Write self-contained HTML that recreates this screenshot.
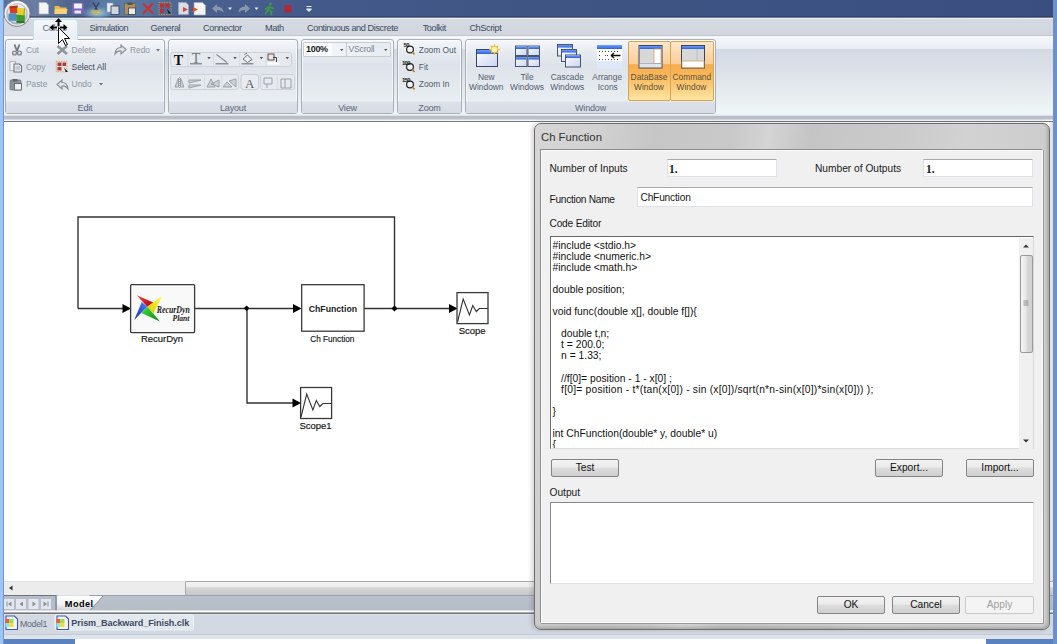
<!DOCTYPE html>
<html><head><meta charset="utf-8">
<style>
*{margin:0;padding:0;box-sizing:border-box}
html,body{width:1057px;height:644px;overflow:hidden;background:#fff;font-family:"Liberation Sans",sans-serif;position:relative}
.a{position:absolute}
.t{position:absolute;white-space:pre;line-height:1}
#lb{left:0;top:0;width:4px;height:644px;background:linear-gradient(90deg,#a3c6f4 0,#9cc1f2 70%,#6e9ad8 75%,#6e9ad8 100%)}
#rb{left:1053px;top:0;width:4px;height:644px;background:#6e90c7}
#title{left:4px;top:0;width:1049px;height:19px;background:linear-gradient(rgba(0,0,0,0) 0,rgba(0,0,0,0) 15.5px,rgba(40,55,90,.5) 16.5px,rgba(140,148,162,1) 18px,#eef0f3 18px),linear-gradient(90deg,#5d7198 0,#6a7ea3 3%,#52678f 6%,#4d6590 8%,#5a7ea6 9.5%,#5a7aa2 12%,#4a6190 18%,#43598a 30%,#3f5684 50%,#3c5282 75%,#3a4f7f 100%)}
#tabs{left:4px;top:19px;width:1049px;height:20px;background:linear-gradient(#d5dae2 0,#d2d7df 16.5px,#c2c6cd 16.5px,#c2c6cd 17.5px,#f4f6f9 17.5px)}
#ribbon{left:4px;top:38px;width:1049px;height:77px;background:linear-gradient(#f4f7fb 0,#e8ecf3 11.5px,#d3d9e3 11.5px,#dfe4ea 40px,#e8eef0 60px,#eff8f8 77px)}
#rband{left:4px;top:114px;width:1049px;height:8px;background:linear-gradient(#eef1f4 0,#eef1f4 1px,#dfe3e9 1px,#dfe3e9 2px,#b7bdc6 2px,#bcc2ca 5px,#d3d8de 5px,#d3d8de 6px,#f3f5f8 6px,#f3f5f8 7px,#74777e 7px,#74777e 8px)}
.grp{position:absolute;top:39px;height:75px;border:1px solid #a9afb8;box-shadow:inset 0 0 0 1px rgba(255,255,255,.6);border-radius:3px;background:linear-gradient(#f5f7fa 0,#e6eaf0 18%,#dee3eb 35%,#e8edf1 80%,#edf2f3 100%)}
.glab{position:absolute;left:0;right:0;bottom:0;height:12px;background:linear-gradient(#dde2ea,#d6dbe4);border-top:1px solid #e6eaf0;color:#5a6678;font-size:9px;letter-spacing:-0.15px;text-align:center;line-height:12.5px}
.tab{font-size:9.2px;color:#3c4a5e;letter-spacing:-0.42px}
.tab{margin-top:0px}
.obtn{border:1px solid #d7a450;border-radius:2px;background:linear-gradient(#fde8cc 0,#fcd8ab 20%,#fbcd98 38%,#f8ad4e 39%,#f9b558 55%,#fbcf7e 80%,#fde6a2 100%)}
.rt{font-size:8.4px;color:#8c95a2}
.wl{transform:translateX(-50%);color:#515c6c}
.dk{color:#3b4654}
#canvas{left:4px;top:122px;width:1049px;height:459px;background:#fff}
#hs{left:4px;top:581px;width:1049px;height:14px;background:#ececec;border-top:1px solid #e0e0e0}
#sheet{left:4px;top:595px;width:1049px;height:15.5px;background:linear-gradient(#bac2cc,#b4bcc6)}
#doctabs{left:4px;top:613px;width:1049px;height:21px;background:#d3d9e2}
#bot1{left:4px;top:634px;width:1049px;height:5px;background:#dde3ea;border-top:1px solid #c4cbd6}
#bot2{left:75px;top:639px;width:911px;height:5px;background:#fff}
#botb1{left:0;top:639px;width:75px;height:5px;background:#5b82c0}
#botb2{left:986px;top:639px;width:71px;height:5px;background:#5b82c0}
/* dialog */
#dlg{left:534px;top:123px;width:516px;height:507px;border:1px solid #6e6e6e;border-radius:7px;background:linear-gradient(100deg,#d6d6d6 0,#d2d2d2 10%,#c6c6c6 20%,#c9c9c9 33%,#d4d4d4 39%,#c5c5c5 46%,#cacaca 60%,#d2d2d2 72%,#cdcdcd 85%,#d0d0d0 100%);box-shadow:-2px 0 5px rgba(0,0,0,.18),inset -2px -2px 3px rgba(0,0,0,.18)}
#panel{left:540px;top:149px;width:503px;height:474px;background:#f0f0f0;border:1px solid #8c8c8c;border-right-color:#fafafa;border-bottom-color:#fafafa;box-shadow:1px 1px 0 #9a9a9a,inset 1px 1px 0 #fafafa}
.lbl{font-size:10.2px;color:#1a1a1a}
.inp{position:absolute;background:#fff;border:1px solid #dde2e8;border-top-color:#a9a9a9}
.btn{position:absolute;height:18px;border:1px solid #858585;border-radius:2px;background:linear-gradient(#f2f2f2 0,#ebebeb 45%,#dddddd 50%,#cfcfcf 100%);font-size:10.2px;text-align:center;line-height:16.5px;color:#111}
#code{left:550px;top:236px;width:484px;height:213px;background:#fff;border:1px solid #6f6f6f;border-top:1.5px solid #666;border-right-color:#dadada;border-bottom-color:#dadada;overflow:hidden}
.code{position:absolute;left:1.5px;top:2.8px;font-size:10.3px;line-height:11.07px;color:#111;white-space:pre}
</style></head><body>
<div class="a" id="title"></div>
<div class="a" id="tabs"></div>
<div class="a" id="ribbon"></div>
<div class="a" id="rband"></div>
<div class="a" id="canvas"></div>
<div class="a" id="hs"></div>
<div class="a" style="left:1049px;top:122px;width:4px;height:473px;background:linear-gradient(90deg,#f2f2f2,#dedede)"></div>
<div class="a" id="sheet"></div>
<div class="a" id="doctabs"></div>
<div class="a" id="bot1"></div>
<div class="a" id="bot2"></div>
<div class="a" id="botb1"></div>
<div class="a" id="botb2"></div>
<div class="a" id="lb"></div>
<div class="a" id="rb"></div>

<!-- ribbon -->
<div class="grp" style="left:5px;width:160px"><div class="glab">Edit</div></div>
<div class="grp" style="left:168px;width:130px"><div class="glab">Layout</div></div>
<div class="grp" style="left:301px;width:93px"><div class="glab">View</div></div>
<div class="grp" style="left:397px;width:65px"><div class="glab">Zoom</div></div>
<div class="grp" style="left:465px;width:251px"><div class="glab">Window</div></div>
<div class="a obtn" style="left:628px;top:41px;width:43px;height:60px"></div>
<div class="a obtn" style="left:670px;top:41px;width:44px;height:60px"></div>
<div class="t rt wl" style="left:649px;top:72.7px;color:#5e5035">DataBase</div>
<div class="t rt wl" style="left:649px;top:82.7px;color:#5e5035">Window</div>
<div class="t rt wl" style="left:691.8px;top:72.7px;color:#5e5035">Command</div>
<div class="t rt wl" style="left:691.5px;top:82.7px;color:#5e5035">Window</div>
<!-- combos -->
<div class="a" style="left:303px;top:41.5px;width:88px;height:15.5px;border:1px solid #c7ccd3;background:linear-gradient(90deg,#f7f9fb 0,#eef1f5 50%,#e8ecf1 100%);border-radius:1px"></div>
<div class="a" style="left:346px;top:42px;width:1px;height:14.5px;background:#c7ccd3"></div>
<div class="a" style="left:304px;top:42.5px;width:28px;height:13.5px;background:#f8fafc"></div>
<div class="t" style="left:306px;top:45px;font-size:9px;color:#1a1a1a;font-weight:bold;letter-spacing:-0.3px">100%</div>
<div class="t" style="left:348.5px;top:45px;font-size:8.6px;color:#7a8390;letter-spacing:-0.2px">VScroll</div>
<svg class="a" style="left:0;top:0" width="1057" height="122" viewBox="0 0 1057 122">
<defs>
<radialGradient id="orb" cx="0.5" cy="0.45" r="0.55"><stop offset="0" stop-color="#ffffff"/><stop offset="0.75" stop-color="#e8eaee"/><stop offset="0.9" stop-color="#b8bcc4"/><stop offset="1" stop-color="#8d939c"/></radialGradient>
<linearGradient id="wtb" x1="0" y1="0" x2="0" y2="1"><stop offset="0" stop-color="#6fa0ff"/><stop offset="1" stop-color="#2f5fd8"/></linearGradient>
<linearGradient id="wbody" x1="0" y1="0" x2="1" y2="1"><stop offset="0" stop-color="#ffffff"/><stop offset="1" stop-color="#c9d4f4"/></linearGradient>
<linearGradient id="glow" x1="0" y1="0" x2="1" y2="0"><stop offset="0" stop-color="#5d7aa8" stop-opacity="0"/><stop offset="0.5" stop-color="#9ad0f0" stop-opacity="0.8"/><stop offset="1" stop-color="#5d7aa8" stop-opacity="0"/></linearGradient>
</defs>
<!-- title glow -->

<radialGradient id="glw" cx="0.5" cy="0.5" r="0.5"><stop offset="0" stop-color="#c0ecff" stop-opacity="0.85"/><stop offset="1" stop-color="#80b0d8" stop-opacity="0"/></radialGradient><ellipse cx="97" cy="13" rx="16" ry="7" fill="url(#glw)"/>
<!-- orb -->
<linearGradient id="orbr" x1="0" y1="0" x2="0" y2="1"><stop offset="0" stop-color="#f4f4f6"/><stop offset="1" stop-color="#b4b8c0"/></linearGradient>
<circle cx="17" cy="13.5" r="13" fill="url(#orbr)" stroke="#6f757e" stroke-width="0.7"/>
<circle cx="17" cy="13.5" r="11.8" fill="none" stroke="#ffffff" stroke-width="1" opacity="0.8"/>
<circle cx="17" cy="13.8" r="10.2" fill="url(#orb)" stroke="#a9aeb6" stroke-width="0.6"/>
<path d="M9.5 6.5L17.5 5.5L18 13L10 13.5Z" fill="#d8401c"/><path d="M9.5 6.5L17.5 5.5L17.8 7.5L10 8.5Z" fill="#a02818" opacity="0.6"/>
<path d="M17 7.5L25 8.5L24.5 16L17.5 15Z" fill="#e2d22a"/><path d="M24 8.5L25 8.5L24.5 16L23.5 16Z" fill="#a89a10"/>
<path d="M8.5 13.5L16.5 13L16.5 21L8.5 20.5Z" fill="#4f8fc4"/>
<path d="M16 14.5L25 15.5L24.5 23L16.5 22.5Z" fill="#3f9a32"/><path d="M16.5 21L24.5 21.5L24.5 23L16.5 22.5Z" fill="#2a6a20"/>
<!-- QAT -->
<path d="M39 2.5H46L48.5 5V14H39Z" fill="#f4f4f4" stroke="#b0b4bc" stroke-width="0.7"/>
<path d="M54.5 6H59L60.5 7.5H66.5V14H54.5Z" fill="#e9b94a"/><path d="M55 9H67.5L66.5 14H54.5Z" fill="#f5d27a"/>
<rect x="72" y="3" width="12" height="11" fill="#7a63b8"/><rect x="74" y="3.5" width="8" height="5" fill="#f0f0f8"/><rect x="74.5" y="10.5" width="6.5" height="3" fill="#e8e8f0"/>
<path d="M93 2.5L97.5 10M99 2.5L94.5 10" stroke="#33415a" stroke-width="1.4"/><circle cx="94" cy="12" r="2" fill="none" stroke="#c8b040" stroke-width="1.2"/><circle cx="98.5" cy="12" r="2" fill="none" stroke="#c8b040" stroke-width="1.2"/>
<rect x="107" y="3" width="6" height="9" fill="#e8ecf2" stroke="#9aa4b2" stroke-width="0.6"/><rect x="111" y="6" width="8" height="8.5" fill="#cfd6e0" stroke="#3e4a5a" stroke-width="0.9"/>
<rect x="124.5" y="3.5" width="11" height="11" fill="#b09060" stroke="#6b5a40" stroke-width="0.6"/><rect x="128.5" y="8" width="7" height="6.5" fill="#e8eaee" stroke="#333" stroke-width="0.7"/><rect x="127.5" y="2.5" width="5" height="2.5" fill="#555"/>
<path d="M143 3.5L153 13.5M153 3.5L143 13.5" stroke="#d42c2c" stroke-width="2"/>
<g fill="#c03030"><rect x="160" y="3.5" width="4" height="4"/><rect x="165.5" y="3.5" width="4" height="4"/><rect x="160" y="9" width="4" height="4"/></g><rect x="159" y="2.5" width="12" height="12" fill="none" stroke="#e09030" stroke-width="0.8" stroke-dasharray="1.5 1"/><path d="M167 9L171 13.5L168.5 13.5Z" fill="#111"/>
<path d="M178.5 2.5H186L188.5 5V14.5H178.5Z" fill="#d8dce4" stroke="#a0a8b4" stroke-width="0.6"/><path d="M183 7L188 9.5L183 12Z" fill="#e04040"/>
<path d="M194 2.5H202.5L205.5 5.5V15H194Z" fill="#f4f4f4" stroke="#a0a8b4" stroke-width="0.6"/><path d="M193 7L198 9.5L193 12Z" fill="#ee5010"/>
<path d="M212 8.5L217 4V6.5Q223 6.5 223.5 12.5Q221 9.5 217 10V13Z" fill="#8a97aa"/>
<path d="M228 7.5L232 7.5L230 10Z" fill="#e6ebf2"/>
<path d="M250 8.5L245 4V6.5Q239 6.5 238.5 12.5Q241 9.5 245 10V13Z" fill="#8a97aa"/>
<path d="M254.5 7.5L258.5 7.5L256.5 10Z" fill="#e6ebf2"/>
<g stroke="#3a9a48" stroke-width="1.8" fill="none" stroke-linecap="round"><circle cx="270.5" cy="4" r="1.4" fill="#3a9a48" stroke="none"/><path d="M269.5 6.5L268 10.5L265.5 13.5M268.5 10L271.5 11.5L271 14.5M269.5 7L273.5 8.5M268 7.5L265.5 9"/></g>
<rect x="284.5" y="5" width="7" height="7.5" fill="#b02838"/>
<path d="M306.5 6.5H311.5M306.5 9L309 11.5L311.5 9Z" stroke="#e8eef6" stroke-width="1" fill="#e8eef6"/>
<!-- Edit group icons -->
<g>
<path d="M14.5 44.5L17 51M19.5 44.5L17 51" stroke="#6f757d" stroke-width="1.8"/><circle cx="14.5" cy="53" r="1.9" fill="none" stroke="#80868e" stroke-width="1.4"/><circle cx="19.5" cy="53" r="1.9" fill="none" stroke="#80868e" stroke-width="1.4"/>
<path d="M57.5 46L67 54M67 46L57.5 54" stroke="#8f949b" stroke-width="2.6"/>
<path d="M126 49.5L121 45V47.5Q115.5 47.5 115 54Q117.5 50.5 121 51V54Z" fill="#e4e7ea" stroke="#8a9098" stroke-width="1.2"/>
<path d="M156 49L160 49L158 51.5Z" fill="#6a7280"/>
<rect x="10" y="61.5" width="5.5" height="9" fill="#eef0f3" stroke="#a2a7af" stroke-width="0.8"/><path d="M14 64H19.5L21.5 66V72H14Z" fill="#e6e9ee" stroke="#6f757d" stroke-width="1.1"/><path d="M15.5 67H20M15.5 69H20" stroke="#8a9098" stroke-width="0.7"/>
<g fill="#b03a3a"><rect x="57.5" y="62.5" width="4" height="3.5"/><rect x="62.5" y="62.5" width="3.5" height="3.5"/><rect x="57.5" y="67" width="4" height="3.5"/></g><rect x="56.3" y="61.3" width="10.5" height="10.5" fill="none" stroke="#e59c3a" stroke-width="0.9" stroke-dasharray="1.4 1"/><path d="M64 67.5L68 72L65.8 72Z" fill="#111"/>
<rect x="10" y="80" width="11" height="10" rx="1" fill="#8e939a" stroke="#6a7078" stroke-width="0.7"/><rect x="14.5" y="83.5" width="7" height="6.5" fill="#eef0f3" stroke="#60666e" stroke-width="0.9"/><rect x="12.5" y="79" width="5" height="2.5" fill="#60666e"/>
<path d="M57 84.5L62 80V82.5Q67.5 82.5 68 89Q65.5 85.5 62 86V89Z" fill="#e4e7ea" stroke="#8a9098" stroke-width="1.2"/>
<path d="M99 83L103 83L101 85.5Z" fill="#6a7280"/>
</g>
<!-- Layout group -->
<rect x="170.5" y="52.5" width="121" height="14" rx="2.5" fill="#e6eaef" stroke="#c6ccd4" stroke-width="0.8"/>
<rect x="170.5" y="74.5" width="68" height="15" rx="2.5" fill="#e6eaef" stroke="#c6ccd4" stroke-width="0.8"/>
<rect x="241" y="74.5" width="17.5" height="15" rx="2.5" fill="#e9edf2" stroke="#bfc5cd" stroke-width="0.8"/>
<rect x="260.5" y="74.5" width="34" height="15" rx="2.5" fill="#e6eaef" stroke="#c6ccd4" stroke-width="0.8"/>
<text x="178.5" y="64.5" font-family="Liberation Serif" font-weight="bold" font-size="14" fill="#111" text-anchor="middle">T</text>
<text x="196" y="62.5" font-family="Liberation Serif" font-size="14" fill="#6f747b" text-anchor="middle">T</text><rect x="190" y="63" width="12" height="1.5" fill="#8a9098"/>
<path d="M207.3 57L210.8 57L209 59.3Z M233.3 57L236.8 57L235 59.3Z M259.6 57L263.1 57L261.3 59.3Z M285.5 57L289 57L287.3 59.3Z" fill="#555"/><path d="M188 53.5V66M213.5 53.5V66M239.7 53.5V66M265.9 53.5V66M188 75.5V89M204.6 75.5V89M221.8 75.5V89M277.4 75.5V89" stroke="#d2d7de" stroke-width="0.8"/>
<path d="M216.5 54.5L227 62.5" stroke="#8a9098" stroke-width="1.2"/><rect x="215.5" y="63" width="13" height="1.5" fill="#8a9098"/>
<path d="M243 59L247.5 55L252 59.5L247.5 62.5Z" fill="#f0f0f0" stroke="#6a6f76" stroke-width="1"/><path d="M244.5 54.5L247 53" stroke="#6a6f76" stroke-width="1"/><rect x="241.5" y="63" width="12" height="1.5" fill="#8a9098"/>
<rect x="268" y="54" width="6" height="6" fill="#f4e4e0" stroke="#333" stroke-width="0.8"/><path d="M273 57.5H276.5V62" stroke="#333" stroke-width="0.9" fill="none"/><rect x="267.5" y="62.5" width="12" height="2" fill="#fff"/>
<g stroke="#9aa0a8" stroke-width="1" fill="#cdd2d9">
<path d="M175 87L178.5 78V87Z M180.5 78L184 87H180.5Z"/><path d="M179.5 77V89" stroke-dasharray="1 1" fill="none"/>
<path d="M189 80H201L189 83Z M189 85H201L189 88Z" />
<path d="M207 87L211 79L215 87Z M211 84L219 80L219 87Z"/>
<path d="M223 87L227 82L232 87Z M229 81L236 79L236 87Z"/>
<path d="M264 78H272V84H264Z M267 84V88" fill="none"/>
<path d="M281 79H291V88H281Z M285 79V88" fill="none"/>
</g>
<text x="249.8" y="87.5" font-family="Liberation Serif" font-size="13" fill="#5a5f66" text-anchor="middle">A</text>
<!-- combo arrows -->
<path d="M340 49L343.5 49L341.8 51Z M384 49L387.5 49L385.8 51Z" fill="#555"/>
<!-- Zoom icons -->
<g>
<circle cx="410" cy="49.5" r="3.4" fill="#f2f4f4" stroke="#222" stroke-width="1.2"/><path d="M412.3 52L414.5 54.5" stroke="#c08030" stroke-width="1.8"/><text x="403.5" y="47" font-family="Liberation Sans" font-weight="bold" font-size="5.8" fill="#111" letter-spacing="-0.4">50</text>
<circle cx="410" cy="67" r="3.4" fill="#f2f4f4" stroke="#222" stroke-width="1.2"/><path d="M412.3 69.5L414.5 72" stroke="#c08030" stroke-width="1.8"/><text x="402" y="64.5" font-family="Liberation Sans" font-weight="bold" font-size="5.8" fill="#111" letter-spacing="-0.6">100</text>
<circle cx="410" cy="84.5" r="3.4" fill="#f2f4f4" stroke="#222" stroke-width="1.2"/><path d="M412.3 87L414.5 89.5" stroke="#c08030" stroke-width="1.8"/><text x="402" y="82" font-family="Liberation Sans" font-weight="bold" font-size="5.8" fill="#111" letter-spacing="-0.6">150</text>
</g>
<!-- Window icons -->
<g>
<rect x="476.5" y="49.5" width="21" height="17" fill="url(#wbody)" stroke="#3a4660" stroke-width="1"/><rect x="477" y="50" width="20" height="4" fill="url(#wtb)"/>
<path d="M500.3 49.5 L497.5 50.7 L498.6 53.6 L495.7 52.5 L494.5 55.3 L493.3 52.5 L490.4 53.6 L491.5 50.7 L488.7 49.5 L491.5 48.3 L490.4 45.4 L493.3 46.5 L494.5 43.7 L495.7 46.5 L498.6 45.4 L497.5 48.3Z" fill="#f0b828"/><circle cx="494.5" cy="49.5" r="2.8" fill="#fff4b0"/>
<rect x="515.5" y="46" width="11.5" height="9.5" fill="url(#wbody)" stroke="#3a4660" stroke-width="0.9"/><rect x="516" y="46.5" width="10.5" height="2.5" fill="url(#wtb)"/>
<rect x="528" y="46" width="11.5" height="9.5" fill="url(#wbody)" stroke="#3a4660" stroke-width="0.9"/><rect x="528.5" y="46.5" width="10.5" height="2.5" fill="url(#wtb)"/>
<rect x="515.5" y="56.5" width="11.5" height="10" fill="url(#wbody)" stroke="#3a4660" stroke-width="0.9"/><rect x="516" y="57" width="10.5" height="2.5" fill="url(#wtb)"/>
<rect x="528" y="56.5" width="11.5" height="10" fill="url(#wbody)" stroke="#3a4660" stroke-width="0.9"/><rect x="528.5" y="57" width="10.5" height="2.5" fill="url(#wtb)"/>
<rect x="557.5" y="44.5" width="15" height="11.5" fill="url(#wbody)" stroke="#3a4660" stroke-width="0.9"/><rect x="558" y="45" width="14" height="2.5" fill="url(#wtb)"/>
<rect x="561.5" y="49.5" width="15" height="12" fill="url(#wbody)" stroke="#3a4660" stroke-width="0.9"/><rect x="562" y="50" width="14" height="2.5" fill="url(#wtb)"/>
<rect x="565.5" y="55" width="15" height="12" fill="url(#wbody)" stroke="#3a4660" stroke-width="0.9"/><rect x="566" y="55.5" width="14" height="2.5" fill="url(#wtb)"/>
<rect x="597" y="45" width="25" height="23.5" fill="#dfe7fb"/><rect x="597" y="45" width="25" height="4" fill="url(#wtb)"/><rect x="597" y="49" width="25" height="12" fill="#fff"/>
<g fill="#444"><rect x="599" y="51" width="1" height="1"/><rect x="602" y="51" width="1" height="1"/><rect x="605" y="51" width="1" height="1"/><rect x="608" y="51" width="1" height="1"/><rect x="611" y="51" width="1" height="1"/><rect x="614" y="51" width="1" height="1"/><rect x="617" y="51" width="1" height="1"/><rect x="599" y="55" width="1" height="1"/><rect x="605" y="55" width="1" height="1"/><rect x="607" y="55" width="1" height="1"/><rect x="599" y="59" width="1" height="1"/><rect x="602" y="59" width="1" height="1"/><rect x="605" y="59" width="1" height="1"/><rect x="608" y="59" width="1" height="1"/><rect x="611" y="59" width="1" height="1"/><rect x="614" y="59" width="1" height="1"/><rect x="617" y="59" width="1" height="1"/></g>
<path d="M611 55.5H620.5M611 55.5L614 53M611 55.5L614 58" stroke="#111" stroke-width="1.3" fill="none"/>
<rect x="639" y="45.5" width="23" height="22.5" fill="#d8d8d8" stroke="#3a4660" stroke-width="1"/><rect x="639.5" y="46" width="22" height="3" fill="url(#wtb)"/><rect x="654" y="49" width="7" height="14.5" fill="#fff" stroke="#c8a870" stroke-width="0.8"/><rect x="639.5" y="63.5" width="22" height="4" fill="#e4e4e4" stroke="#7a8aa8" stroke-width="0.5"/>
<rect x="681.5" y="45.5" width="23" height="22.5" fill="#d8d8d8" stroke="#3a4660" stroke-width="1"/><rect x="682" y="46" width="22" height="3" fill="url(#wtb)"/><rect x="682" y="61" width="22" height="6.5" fill="#fff" stroke="#c8a870" stroke-width="0.8"/><path d="M697 49V61" stroke="#b0b8c8" stroke-width="0.8"/>
</g>
</svg>
<!-- ribbon text -->
<div class="t rt" style="left:25.9px;top:45.8px">Cut</div>
<div class="t rt" style="left:71.6px;top:45.8px">Delete</div>
<div class="t rt" style="left:130px;top:45.8px">Redo</div>
<div class="t rt" style="left:25.9px;top:62.6px">Copy</div>
<div class="t rt dk" style="left:71.6px;top:62.6px">Select All</div>
<div class="t rt" style="left:25.9px;top:79.9px">Paste</div>
<div class="t rt" style="left:71.6px;top:79.9px">Undo</div>
<div class="t rt dk" style="left:418.8px;top:45.6px;color:#4f5b6b">Zoom Out</div>
<div class="t rt dk" style="left:418.8px;top:62.9px;color:#4f5b6b">Fit</div>
<div class="t rt dk" style="left:418.8px;top:80px;color:#4f5b6b">Zoom In</div>
<div class="t rt wl" style="left:486.3px;top:72.7px">New</div>
<div class="t rt wl" style="left:486.3px;top:82.7px">Windown</div>
<div class="t rt wl" style="left:527px;top:72.7px">Tile</div>
<div class="t rt wl" style="left:527px;top:82.7px">Windows</div>
<div class="t rt wl" style="left:567.3px;top:72.7px">Cascade</div>
<div class="t rt wl" style="left:567.3px;top:82.7px">Windows</div>
<div class="t rt wl" style="left:607.2px;top:72.7px">Arrange</div>
<div class="t rt wl" style="left:607.8px;top:82.7px">Icons</div>
<!-- tabs -->
<div class="a" style="left:33px;top:19px;width:45px;height:21px;border:1px solid #bfe3ea;border-bottom:none;border-radius:3px 3px 0 0;background:linear-gradient(#f4f7fb,#e9eef5)"></div>
<div class="t tab" style="left:42.5px;top:24.3px;color:#5a6e8a">Colors</div>
<div class="t tab" style="left:89.5px;top:24.3px">Simulation</div>
<div class="t tab" style="left:150.5px;top:24.3px">General</div>
<div class="t tab" style="left:203px;top:24.3px">Connector</div>
<div class="t tab" style="left:265px;top:24.3px">Math</div>
<div class="t tab" style="left:307px;top:24.3px">Continuous and Discrete</div>
<div class="t tab" style="left:422.7px;top:24.3px">Toolkit</div>
<div class="t tab" style="left:469.4px;top:24.3px">ChScript</div>
<!-- bottom -->
<div class="a" style="left:185px;top:581px;width:868px;height:14.5px;border:1px solid #a9a9a9;border-right:none;border-radius:2px 0 0 2px;background:linear-gradient(#f2f2f2 0,#ececec 35%,#d6d6d6 45%,#c8c8c8 100%)"></div>
<svg class="a" style="left:0;top:0" width="1057" height="644" viewBox="0 0 1057 644">
<path d="M12.5 585.5V590.5L9 588Z" fill="#333"/>
<rect x="4" y="595.5" width="52" height="15.5" fill="#b4bdc9"/>
<path d="M4 595.5H56V611" stroke="#6f747b" stroke-width="1" fill="none"/>
<g fill="#e4e8ee"><rect x="4" y="599" width="10" height="10"/><rect x="16" y="599" width="10" height="10"/><rect x="28.5" y="599" width="10" height="10"/><rect x="41" y="599" width="10" height="10"/></g>
<g fill="#8a9098"><path d="M6.5 601.5H7.5V606.5H6.5Z M11.5 601.5V606.5L8 604Z"/><path d="M23 601.5V606.5L19.5 604Z"/><path d="M32.5 601.5V606.5L36 604Z"/><path d="M43.5 601.5V606.5L47 604Z M47.5 601.5H48.5V606.5H47.5Z"/></g>
<defs><linearGradient id="mt" x1="0" y1="0" x2="0" y2="1"><stop offset="0" stop-color="#ffffff"/><stop offset="0.6" stop-color="#eef0f2"/><stop offset="1" stop-color="#c8ccd2"/></linearGradient></defs>
<path d="M57 611V597Q57 595.5 58.5 595.5H103.5L89.5 611Z" fill="url(#mt)"/>
<path d="M103.5 595.5L89.5 611" stroke="#7c8088" stroke-width="0.8"/>
<path d="M89.5 595.5H1053" stroke="#9aa2ad" stroke-width="1"/>
<rect x="4" y="610.4" width="1049" height="2" fill="#fbfbfc"/><rect x="4" y="612.6" width="1049" height="1.2" fill="#36383e"/><rect x="4" y="613.8" width="1049" height="1" fill="#e2e6ee"/>
<rect x="55" y="614.5" width="138.5" height="15.5" rx="1.5" fill="#e3e8ee" stroke="#e6f4f6" stroke-width="1"/>
<g>
<path d="M6 616H14.5L17.5 619V629.5H6Z" fill="#f2f4fb" stroke="#4656a6" stroke-width="1.1"/><rect x="5.5" y="619" width="4" height="4" fill="#ff5a20"/><rect x="9.5" y="619" width="4" height="4" fill="#90e060"/><rect x="5.5" y="623" width="4" height="4" fill="#80e8f0"/><rect x="9.5" y="623" width="4" height="4" fill="#f8e020"/>
<path d="M57 616H65.5L68.5 619V629.5H57Z" fill="#f2f4fb" stroke="#4656a6" stroke-width="1.1"/><rect x="56.5" y="619" width="4" height="4" fill="#ff5a20"/><rect x="60.5" y="619" width="4" height="4" fill="#90e060"/><rect x="56.5" y="623" width="4" height="4" fill="#80e8f0"/><rect x="60.5" y="623" width="4" height="4" fill="#f8e020"/>
</g>
</svg>
<div class="t" style="left:64.8px;top:599.8px;font-size:9.2px;font-weight:bold;color:#000;letter-spacing:0.45px">Model</div>
<div class="t" style="left:20px;top:619.5px;font-size:8.8px;color:#5c6878;letter-spacing:-0.3px">Model1</div>
<div class="t" style="left:71.3px;top:618.6px;font-size:9.1px;font-weight:bold;color:#3c4a60;letter-spacing:-0.1px">Prism_Backward_Finish.clk</div>
<!-- cursor -->
<svg class="a" style="left:0;top:0" width="120" height="60" viewBox="0 0 120 60">
<g fill="#000" stroke="#fff" stroke-width="1" paint-order="stroke" stroke-linejoin="miter">
<path d="M58.5 18L62 22H59.5V26.5H57.5V22H55Z"/>
<path d="M49.5 27.5L53.5 24V26.5H57V28.5H53.5V31Z"/>
<path d="M67.5 27.5L63.5 24V26.5H60V28.5H63.5V31Z"/>
<path d="M58.5 27.5V43.5L62.5 39.5L65.5 45.5L67.5 44.5L64.5 38.5H69.5Z" fill="#fff" stroke="#000" stroke-width="1" paint-order="normal"/>
</g>
</svg>
<!-- diagram -->
<svg class="a" style="left:0;top:0" width="1057" height="644" viewBox="0 0 1057 644">
<defs>
<linearGradient id="gr" x1="0" y1="0" x2="1" y2="1"><stop offset="0" stop-color="#ff4040"/><stop offset="1" stop-color="#b00010"/></linearGradient>
<linearGradient id="gy" x1="1" y1="0" x2="0" y2="1"><stop offset="0" stop-color="#ffff40"/><stop offset="1" stop-color="#d8c800"/></linearGradient>
<linearGradient id="gb" x1="0" y1="1" x2="1" y2="0"><stop offset="0" stop-color="#1030a0"/><stop offset="1" stop-color="#5080ff"/></linearGradient>
<linearGradient id="gg" x1="1" y1="1" x2="0" y2="0"><stop offset="0" stop-color="#108010"/><stop offset="1" stop-color="#40e040"/></linearGradient>
</defs>
<g fill="none" stroke="#333" stroke-width="1.4">
<path d="M78 308.5V217H394.5V308.5"/>
<path d="M78 308.5H123"/>
<path d="M194.5 308.5H294"/>
<path d="M247 308.5V403H293"/>
<path d="M364 308.5H450"/>
</g>
<g fill="#000">
<path d="M122.5 304L131 308.5L122.5 313Z"/>
<path d="M293 304L301.5 308.5L293 313Z"/>
<path d="M449 304L457.5 308.5L449 313Z"/>
<path d="M292.5 398.5L301 403L292.5 407.5Z"/>
<path d="M246.6 305.4L249.4 308.2L246.6 311L243.8 308.2Z"/>
<path d="M394.5 305.5L397.5 308.5L394.5 311.5L391.5 308.5Z"/>
</g>
<g stroke="#3a3a3a" stroke-width="1.3">
<rect x="130.6" y="284.6" width="64" height="48" rx="1" fill="#f9f9f9"/>
<rect x="301.7" y="284.7" width="62.4" height="46.5" fill="#fff"/>
<rect x="457" y="292.6" width="31" height="31" fill="#fff"/>
<rect x="300.6" y="387.5" width="31" height="31" fill="#fff"/>
</g>
<g fill="none" stroke="#333" stroke-width="1.1">
<path d="M457.5 322L463.2 299.1L469.4 314.9L472.8 305.5L476.3 311.5L479.4 308.5H488"/>
<path d="M301 417L306.7 394L312.9 409.9L316.3 400.5L319.8 406.5L322.9 403.5H331.5"/>
</g>
<g>
<path d="M136.7 295.2L153.3 302.5L147.3 306.8Z" fill="url(#gr)"/>
<path d="M162 296L147.3 306.8L153.6 313.5Z" fill="url(#gy)"/>
<path d="M160 321.4L147.3 306.8L141.5 313Z" fill="url(#gg)"/>
<path d="M134.2 320L141.8 302L147.3 306.8Z" fill="url(#gb)"/>
</g>
<text x="173.3" y="313" font-family="Liberation Serif" font-style="italic" font-weight="bold" font-size="9.5" textLength="33" lengthAdjust="spacingAndGlyphs" fill="#222" text-anchor="middle">RecurDyn</text>
<text x="189.5" y="320.5" font-family="Liberation Serif" font-style="italic" font-weight="bold" font-size="9" textLength="17" lengthAdjust="spacingAndGlyphs" fill="#222" text-anchor="end">Plant</text>
<text x="332.9" y="311.5" font-family="Liberation Sans" font-weight="bold" font-size="9.3" fill="#222" text-anchor="middle" textLength="48.3" lengthAdjust="spacingAndGlyphs">ChFunction</text>
<g font-family="Liberation Sans" font-size="9.5" fill="#111" stroke="#111" stroke-width="0.15" text-anchor="middle">
<text x="162" y="342">RecurDyn</text>
<text x="332.3" y="342" textLength="44" lengthAdjust="spacingAndGlyphs">Ch Function</text>
<text x="472.1" y="334">Scope</text>
<text x="315.5" y="429">Scope1</text>
</g>
</svg>

<!-- dialog -->
<div class="a" id="dlg"></div>
<div class="t" style="left:541px;top:131.6px;font-size:11.3px;color:#333">Ch Function</div>
<div class="a" id="panel"></div>
<div class="t lbl" style="left:549.5px;top:163.5px">Number of Inputs</div>
<div class="inp" style="left:667px;top:159px;width:110px;height:18px"></div>
<div class="t lbl" style="left:669px;top:164px;font-weight:bold;font-family:'Liberation Serif';font-size:11.5px">1.</div>
<div class="t lbl" style="left:815px;top:163.5px">Number of Outputs</div>
<div class="inp" style="left:923px;top:159px;width:110px;height:18px"></div>
<div class="t lbl" style="left:926px;top:164px;font-weight:bold;font-family:'Liberation Serif';font-size:11.5px">1.</div>
<div class="t lbl" style="left:549.5px;top:194.5px;letter-spacing:-0.3px">Function Name</div>
<div class="inp" style="left:637px;top:187px;width:396px;height:20px"></div>
<div class="t lbl" style="left:640.5px;top:193px;letter-spacing:-0.2px">ChFunction</div>
<div class="t lbl" style="left:549.5px;top:219px;letter-spacing:-0.2px">Code Editor</div>
<div class="a" id="code"><div class="code">#include &lt;stdio.h&gt;
#include &lt;numeric.h&gt;
#include &lt;math.h&gt;

double position;

void func(double x[], double f[]){

   double t,n;
   t = 200.0;
   n = 1.33;

   //f[0]= position - 1 - x[0] ;
   <span style="letter-spacing:0.21px">f[0]= position - t*(tan(x[0]) - sin (x[0])/sqrt(n*n-sin(x[0])*sin(x[0])) );</span>

}

int ChFunction(double* y, double* u)
{</div></div>
<div class="a" style="left:1019px;top:237.5px;width:14px;height:211px;background:#f0f0f0"></div>
<div class="a" style="left:1019.5px;top:254.5px;width:13px;height:98px;border:1px solid #9a9a9a;border-radius:2px;background:linear-gradient(90deg,#f4f4f4 0,#e8e8e8 45%,#d8d8d8 55%,#d0d0d0 100%)"></div>
<svg class="a" style="left:1015px;top:240px" width="20" height="210" viewBox="0 0 20 210">
<path d="M8 7.5L11 4.5L14 7.5Z" fill="#333"/><path d="M8 199.5L11 202.5L14 199.5Z" fill="#333"/>
<path d="M8.5 61H13.5M8.5 63H13.5M8.5 65H13.5" stroke="#777" stroke-width="0.8"/>
</svg>
<div class="btn" style="left:551px;top:459px;width:68px">Test</div>
<div class="btn" style="left:875px;top:459px;width:68px">Export...</div>
<div class="btn" style="left:966px;top:459px;width:68px">Import...</div>
<div class="t lbl" style="left:549.5px;top:488px">Output</div>
<div class="a" style="left:550px;top:502px;width:484px;height:82px;background:#fff;border:1px solid #828790;border-right-color:#e3e3e3;border-bottom-color:#e3e3e3"></div>
<div class="btn" style="left:817px;top:596px;width:68px">OK</div>
<div class="btn" style="left:892px;top:596px;width:68px">Cancel</div>
<div class="btn" style="left:965px;top:596px;width:69px;color:#a0a0a0;border-color:#c9c9c9;background:#f4f4f4">Apply</div>
</body></html>
